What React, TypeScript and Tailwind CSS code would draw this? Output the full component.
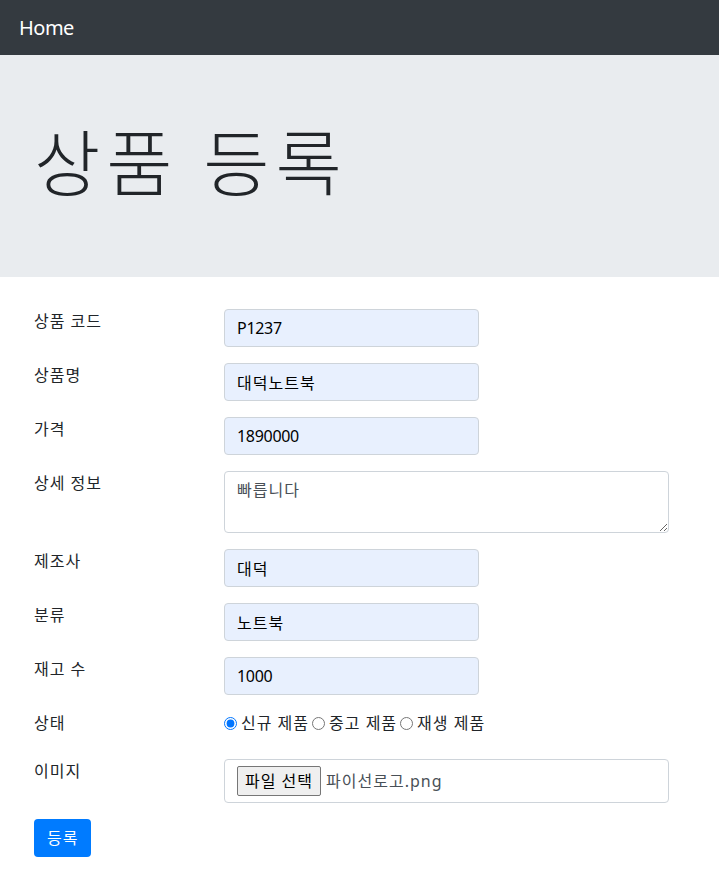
import { useState } from 'react';

const font = { fontFamily: '"Noto Sans", "Noto Sans CJK KR", sans-serif' };

const fields = [
  { label: '상품 코드', value: 'P1237' },
  { label: '상품명', value: '대덕노트북' },
  { label: '가격', value: '1890000' },
];

const fields2 = [
  { label: '제조사', value: '대덕' },
  { label: '분류', value: '노트북' },
  { label: '재고 수', value: '1000' },
];

// Korean glyphs render a bit narrower than in the original font, so they get a little tracking
const hasKorean = (s: string) => /[\uac00-\ud7a3]/.test(s);

function TextRow({ label, value }: { label: string; value: string }) {
  return (
    <div className="flex items-start mb-4">
      <label className="w-[190px] shrink-0 leading-6 tracking-[1px] text-[#212529]">{label}</label>
      <input
        readOnly
        value={value}
        className={`w-[255px] h-[38px] px-3 rounded border border-[#ced4da] bg-[#e8f0fe] text-black outline-none ${
          hasKorean(value) ? 'tracking-[1px]' : 'tracking-[-0.3px]'
        }`}
        style={font}
      />
    </div>
  );
}

export default function App() {
  const [status, setStatus] = useState('new');
  const options = [
    { id: 'new', text: '신규 제품' },
    { id: 'old', text: '중고 제품' },
    { id: 'refurb', text: '재생 제품' },
  ];

  return (
    <div className="min-h-[894px] bg-white text-base text-[#212529]" style={font}>
      <nav className="h-[55px] bg-[#343a40] flex items-center px-[19px]">
        <a href="#" className="text-white text-xl leading-[30px] tracking-[-0.5px]">
          Home
        </a>
      </nav>

      <div className="bg-[#e9ecef] py-16 px-[34px] mb-8">
        <h1 className="text-[72px] font-light leading-[86px] mb-2 tracking-[6px] text-[#212529]">상품 등록</h1>
      </div>

      <form className="px-[34px]">
        {fields.map((f) => (
          <TextRow key={f.label} label={f.label} value={f.value} />
        ))}

        <div className="flex items-start mb-4">
          <label className="w-[190px] shrink-0 leading-6 tracking-[1px]">상세 정보</label>
          <textarea
            defaultValue="빠릅니다"
            className="w-[445px] h-[62px] px-3 py-[6px] leading-6 tracking-[1px] rounded border border-[#ced4da] bg-white text-[#495057] outline-none"
            style={font}
          />
        </div>

        {fields2.map((f) => (
          <TextRow key={f.label} label={f.label} value={f.value} />
        ))}

        <div className="flex items-start h-8 mb-4">
          <label className="w-[190px] shrink-0 leading-6 tracking-[1px]">상태</label>
          <div className="flex items-center leading-6 tracking-[1px]">
            {options.map((o) => (
              <label key={o.id} className="flex items-center mr-[3px]">
                <input
                  type="radio"
                  name="condition"
                  checked={status === o.id}
                  onChange={() => setStatus(o.id)}
                  className="w-[13px] h-[13px] m-0 mr-[4px] accent-[#0075ff]"
                />
                {o.text}
              </label>
            ))}
          </div>
        </div>

        <div className="flex items-start mb-4">
          <label className="w-[190px] shrink-0 leading-6 tracking-[1px]">이미지</label>
          <div className="w-[445px] h-[44px] rounded border border-[#ced4da] flex items-center px-3">
            <span className="h-[30px] px-[7px] flex items-center border border-[#767676] rounded-[2px] bg-[#efefef] text-black tracking-[1px]">
              파일 선택
            </span>
            <span className="ml-[5px] text-[#495057] tracking-[1px]">파이선로고.png</span>
          </div>
        </div>

        <button
          type="button"
          className="h-[38px] px-[13px] rounded bg-[#007bff] text-white leading-6 tracking-[1px]"
          style={font}
        >
          등록
        </button>
      </form>
    </div>
  );
}
